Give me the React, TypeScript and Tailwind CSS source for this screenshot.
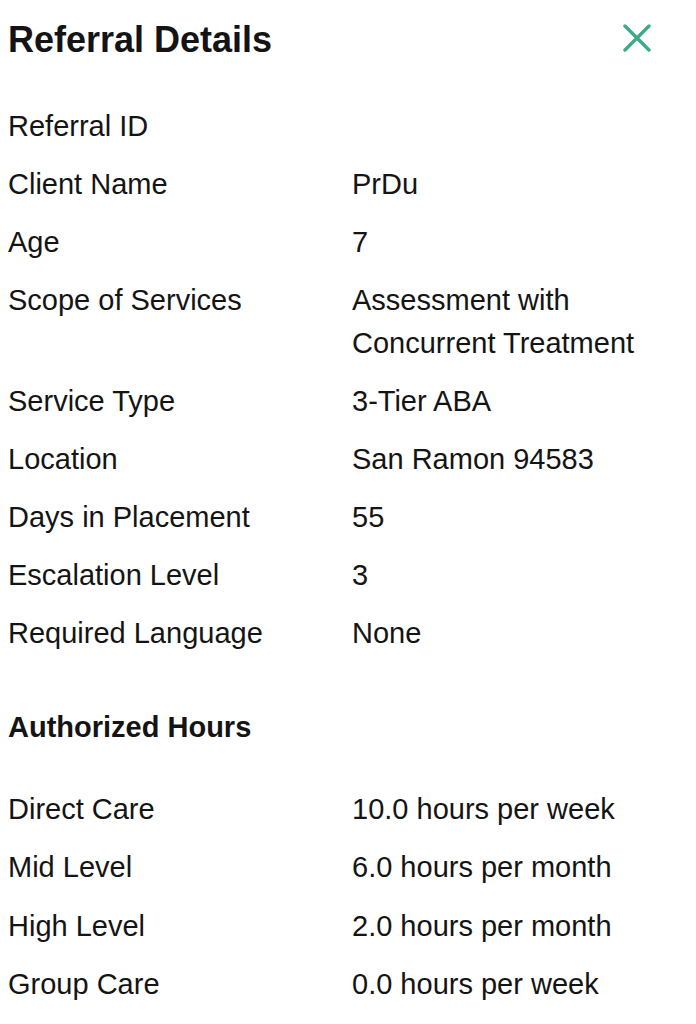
const details = [
  { label: "Referral ID", value: "" },
  { label: "Client Name", value: "PrDu" },
  { label: "Age", value: "7" },
  { label: "Scope of Services", value: "Assessment with Concurrent Treatment" },
  { label: "Service Type", value: "3-Tier ABA" },
  { label: "Location", value: "San Ramon 94583" },
  { label: "Days in Placement", value: "55" },
  { label: "Escalation Level", value: "3" },
  { label: "Required Language", value: "None" },
];

const hours = [
  { label: "Direct Care", value: "10.0 hours per week" },
  { label: "Mid Level", value: "6.0 hours per month" },
  { label: "High Level", value: "2.0 hours per month" },
  { label: "Group Care", value: "0.0 hours per week" },
];

const Rows = ({ items, gap }: { items: { label: string; value: string }[]; gap: string }) => (
  <div className={`grid grid-cols-[344px_300px] text-[29px] leading-[43px] ${gap}`}>
    {items.map((it) => (
      <div key={it.label} className="contents">
        <div>{it.label}</div>
        <div>{it.value}</div>
      </div>
    ))}
  </div>
);

export default function App() {
  return (
    <div className="w-[696px] h-[1024px] bg-white pl-2 pr-[46px] text-[#141414] font-['Liberation_Sans',Arial,sans-serif]">
      <div className="flex h-[80px] items-center justify-between">
        <h1 className="text-[36px] font-bold">Referral Details</h1>
        <svg width="28" height="28" viewBox="0 0 28 28" className="mr-[-1px] mb-[5px]">
          <path d="M2 2 L26 26 M26 2 L2 26" stroke="#3fa98b" strokeWidth="3.4" strokeLinecap="round" fill="none" />
        </svg>
      </div>
      <div className="mt-[25px]">
        <Rows items={details} gap="gap-y-[15px]" />
      </div>
      <h2 className="mt-[51px] text-[29px] font-bold leading-[43px]">Authorized Hours</h2>
      <div className="mt-[39px]">
        <Rows items={hours} gap="gap-y-[15.3px]" />
      </div>
    </div>
  );
}
